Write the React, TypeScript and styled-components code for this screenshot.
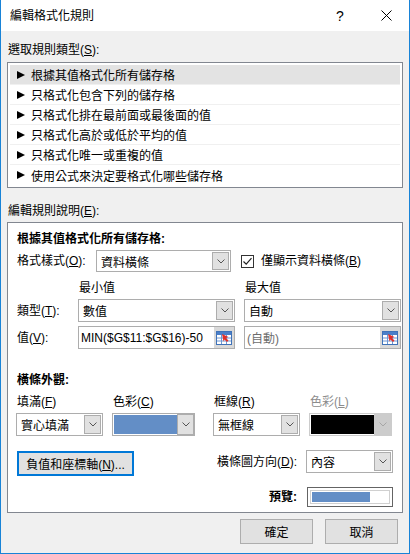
import styled, { createGlobalStyle } from 'styled-components';

const GlobalStyle = createGlobalStyle`
  html, body {
    margin: 0;
    padding: 0;
    background: #f0f0f0;
  }
  body {
    font-family: "Liberation Sans", "Noto Sans CJK TC", sans-serif;
    font-size: 12px;
    color: #000;
  }
`;

const Window = styled.div`
  width: 410px;
  height: 554px;
  box-sizing: border-box;
  border: 1px solid #1883d7;
  border-top: none;
  background: #f0f0f0;
  display: flex;
  flex-direction: column;
`;

const TitleBar = styled.div`
  height: 31px;
  flex-shrink: 0;
  background: #fff;
  display: flex;
  align-items: center;
  padding-left: 9px;
`;

const TitleText = styled.div`
  flex: 1;
  line-height: 16px;
`;

const CaptionButton = styled.div`
  width: 46px;
  height: 31px;
  display: flex;
  align-items: center;
  justify-content: center;
  font-size: 14px;
`;

const Body = styled.div`
  padding: 11px 6px 0;
  display: flex;
  flex-direction: column;
`;

const SectionLabel = styled.div<{ $gap?: number }>`
  line-height: 16px;
  padding-left: 1px;
  margin-top: ${(p) => p.$gap ?? 0}px;
`;

const RuleList = styled.div`
  margin-top: 4px;
  border: 1px solid #828790;
  background: #fff;
  padding: 2px;
`;

const RuleRow = styled.div<{ $selected?: boolean }>`
  height: 20px;
  box-sizing: border-box;
  display: flex;
  align-items: center;
  background: ${(p) => (p.$selected ? '#e3e3e3' : '#fff')};
  border-bottom: 1px solid #f0f0f0;
  &:last-child {
    border-bottom: none;
  }
`;

const Arrow = styled.span`
  width: 0;
  height: 0;
  margin: 0 6px 0 7px;
  border-left: 8px solid #000;
  border-top: 4px solid transparent;
  border-bottom: 4px solid transparent;
`;

const Panel = styled.div`
  margin-top: 3px;
  border: 1px solid #828790;
  background: #fff;
  padding: 8px 9px 5px;
  display: flex;
  flex-direction: column;
`;

const Heading = styled.div<{ $gap?: number }>`
  font-weight: bold;
  line-height: 16px;
  margin-top: ${(p) => p.$gap ?? 0}px;
`;

const FormatRow = styled.div`
  margin-top: 3px;
  height: 22px;
  display: flex;
  align-items: center;
`;

const FieldLabel = styled.div<{ $width: number }>`
  width: ${(p) => p.$width}px;
  flex-shrink: 0;
  line-height: 16px;
`;

const Combo = styled.div<{ $width?: number; $height?: number; $disabled?: boolean }>`
  width: ${(p) => (p.$width ? `${p.$width}px` : 'auto')};
  height: ${(p) => p.$height ?? 23}px;
  box-sizing: border-box;
  border: 1px solid ${(p) => (p.$disabled ? '#cccccc' : '#adadad')};
  background: #fff;
  display: flex;
  align-items: stretch;
`;

const ComboText = styled.div<{ $muted?: boolean; $pad?: number }>`
  flex: 1;
  min-width: 0;
  padding-left: ${(p) => p.$pad ?? 4}px;
  display: flex;
  align-items: center;
  white-space: nowrap;
  overflow: hidden;
  color: ${(p) => (p.$muted ? '#6d6d6d' : '#000')};
`;

const ComboButton = styled.div<{ $disabled?: boolean; $flush?: boolean }>`
  width: 17px;
  margin: ${(p) => (p.$flush ? '0' : '1px')};
  box-sizing: border-box;
  border: 1px solid ${(p) => (p.$disabled ? '#cccccc' : '#adadad')};
  background: ${(p) => (p.$disabled ? '#cccccc' : '#e1e1e1')};
  display: flex;
  align-items: center;
  justify-content: center;
`;

const Swatch = styled.div<{ $color: string }>`
  flex: 1;
  margin: 1px 0 1px 1px;
  background: ${(p) => p.$color};
`;

const RefButton = styled.div`
  width: 20px;
  background: #d9d9d9;
  display: flex;
  align-items: center;
  justify-content: center;
`;

const CheckBox = styled.div`
  width: 13px;
  height: 13px;
  box-sizing: border-box;
  border: 1px solid #333;
  background: #fff;
  margin-left: 10px;
  display: flex;
  align-items: center;
  justify-content: center;
`;

const CheckLabel = styled.div`
  margin-left: 7px;
  line-height: 16px;
`;

const ValueGrid = styled.div<{ $gap: number; $height: number }>`
  margin-top: ${(p) => p.$gap}px;
  height: ${(p) => p.$height}px;
  display: grid;
  grid-template-columns: 52px 157px 157px;
  column-gap: 9px;
  align-items: center;
`;

const ColumnLabel = styled.div<{ $muted?: boolean }>`
  padding-left: 1px;
  line-height: 16px;
  color: ${(p) => (p.$muted ? '#8c8c8c' : '#000')};
`;

const AppearanceGrid = styled.div<{ $gap: number }>`
  margin: ${(p) => p.$gap}px 0 0 -1px;
  display: grid;
  grid-template-columns: 96px 101px 96px 83px;
  align-items: center;
`;

const ActionRow = styled.div`
  margin-top: 14px;
  height: 26px;
  display: flex;
  justify-content: space-between;
  align-items: flex-start;
`;

const AxisButton = styled.button`
  margin-top: 1px;
  width: 117px;
  height: 25px;
  box-sizing: border-box;
  border: 2px solid #0078d7;
  background: #e1e1e1;
  font: inherit;
  color: #000;
  padding: 0;
`;

const RightGroup = styled.div`
  display: flex;
  align-items: center;
  height: 23px;
`;

const InlineLabel = styled.div<{ $bold?: boolean }>`
  margin-right: ${(p) => (p.$bold ? 10 : 9)}px;
  line-height: 16px;
  font-weight: ${(p) => (p.$bold ? 'bold' : 'normal')};
`;

const PreviewRow = styled.div`
  margin-top: 11px;
  display: flex;
  justify-content: flex-end;
  align-items: center;
`;

const PreviewBox = styled.div`
  width: 86px;
  height: 20px;
  box-sizing: border-box;
  border: 1px solid #646464;
  padding: 2px;
  background: #fff;
`;

const PreviewInner = styled.div`
  height: 100%;
  box-sizing: border-box;
  border: 1px solid #d0d0d0;
  padding: 1px;
`;

const PreviewBar = styled.div`
  width: 58px;
  height: 100%;
  background: #638ec6;
`;

const Footer = styled.div`
  margin-top: 6px;
  padding-right: 5px;
  display: flex;
  justify-content: flex-end;
  gap: 12px;
`;

const DialogButton = styled.button`
  width: 73px;
  height: 25px;
  box-sizing: border-box;
  border: 1px solid #adadad;
  background: #e1e1e1;
  font: inherit;
  color: #000;
  padding: 0;
`;

const Chevron = ({ color = '#555' }: { color?: string }) => (
  <svg width="8" height="5" viewBox="0 0 8 5">
    <polyline points="0.5,0.5 4,4 7.5,0.5" fill="none" stroke={color} strokeWidth="1" />
  </svg>
);

const RefIcon = () => (
  <svg width="16" height="14" viewBox="0 0 16 14">
    <rect x="0.5" y="0.5" width="15" height="13" fill="#fff" stroke="#3f72b8" />
    <rect x="1" y="1" width="14" height="3" fill="#4a7fc9" />
    <line x1="1" y1="7" x2="15" y2="7" stroke="#6d97d4" />
    <line x1="1" y1="10" x2="15" y2="10" stroke="#6d97d4" />
    <line x1="5.5" y1="4" x2="5.5" y2="13" stroke="#6d97d4" />
    <line x1="10.5" y1="4" x2="10.5" y2="13" stroke="#6d97d4" />
    <polygon points="6,3 12.5,6 10,7 12.5,9.5 11,11 8.5,8.5 7.5,10.5" fill="#e0302a" />
  </svg>
);

const rules = [
  '根據其值格式化所有儲存格',
  '只格式化包含下列的儲存格',
  '只格式化排在最前面或最後面的值',
  '只格式化高於或低於平均的值',
  '只格式化唯一或重複的值',
  '使用公式來決定要格式化哪些儲存格',
];

export default function App() {
  return (
    <>
      <GlobalStyle />
      <Window>
        <TitleBar>
          <TitleText>編輯格式化規則</TitleText>
          <CaptionButton>?</CaptionButton>
          <CaptionButton>
            <svg width="11" height="11" viewBox="0 0 11 11">
              <line x1="0.5" y1="0.5" x2="10.5" y2="10.5" stroke="#000" />
              <line x1="10.5" y1="0.5" x2="0.5" y2="10.5" stroke="#000" />
            </svg>
          </CaptionButton>
        </TitleBar>
        <Body>
          <SectionLabel>
            選取規則類型(<u>S</u>):
          </SectionLabel>
          <RuleList>
            {rules.map((r, i) => (
              <RuleRow key={r} $selected={i === 0}>
                <Arrow />
                {r}
              </RuleRow>
            ))}
          </RuleList>

          <SectionLabel $gap={15}>
            編輯規則說明(<u>E</u>):
          </SectionLabel>
          <Panel>
            <Heading>根據其值格式化所有儲存格:</Heading>
            <FormatRow>
              <FieldLabel $width={79}>
                格式樣式(<u>O</u>):
              </FieldLabel>
              <Combo $width={135} $height={22}>
                <ComboText>資料橫條</ComboText>
                <ComboButton>
                  <Chevron />
                </ComboButton>
              </Combo>
              <CheckBox>
                <svg width="11" height="11" viewBox="0 0 11 11">
                  <polyline points="1.5,5.5 4.2,8.2 9.5,2.2" fill="none" stroke="#222" strokeWidth="1.2" />
                </svg>
              </CheckBox>
              <CheckLabel>
                僅顯示資料橫條(<u>B</u>)
              </CheckLabel>
            </FormatRow>

            <ValueGrid $gap={8} $height={16}>
              <span />
              <ColumnLabel>最小值</ColumnLabel>
              <ColumnLabel>最大值</ColumnLabel>
            </ValueGrid>
            <ValueGrid $gap={3} $height={23}>
              <FieldLabel $width={52}>
                類型(<u>T</u>):
              </FieldLabel>
              <Combo>
                <ComboText>數值</ComboText>
                <ComboButton>
                  <Chevron />
                </ComboButton>
              </Combo>
              <Combo>
                <ComboText>自動</ComboText>
                <ComboButton>
                  <Chevron />
                </ComboButton>
              </Combo>
            </ValueGrid>
            <ValueGrid $gap={4} $height={23}>
              <FieldLabel $width={52}>
                值(<u>V</u>):
              </FieldLabel>
              <Combo>
                <ComboText $pad={2}>MIN($G$11:$G$16)-50</ComboText>
                <RefButton>
                  <RefIcon />
                </RefButton>
              </Combo>
              <Combo>
                <ComboText $pad={2} $muted>
                  (自動)
                </ComboText>
                <RefButton>
                  <RefIcon />
                </RefButton>
              </Combo>
            </ValueGrid>

            <Heading $gap={23}>橫條外觀:</Heading>
            <AppearanceGrid $gap={6}>
              <ColumnLabel>
                填滿(<u>F</u>)
              </ColumnLabel>
              <ColumnLabel>
                色彩(<u>C</u>)
              </ColumnLabel>
              <ColumnLabel>
                框線(<u>R</u>)
              </ColumnLabel>
              <ColumnLabel $muted>
                色彩(<u>L</u>)
              </ColumnLabel>
            </AppearanceGrid>
            <AppearanceGrid $gap={3}>
              <Combo $width={87}>
                <ComboText>實心填滿</ComboText>
                <ComboButton>
                  <Chevron />
                </ComboButton>
              </Combo>
              <Combo $width={83}>
                <Swatch $color="#638ec6" />
                <ComboButton $flush>
                  <Chevron />
                </ComboButton>
              </Combo>
              <Combo $width={87}>
                <ComboText>無框線</ComboText>
                <ComboButton>
                  <Chevron />
                </ComboButton>
              </Combo>
              <Combo $width={83} $disabled>
                <Swatch $color="#000" />
                <ComboButton $flush $disabled>
                  <Chevron color="#a6a6a6" />
                </ComboButton>
              </Combo>
            </AppearanceGrid>

            <ActionRow>
              <AxisButton>
                負值和座標軸(<u>N</u>)...
              </AxisButton>
              <RightGroup>
                <InlineLabel>
                  橫條圖方向(<u>D</u>):
                </InlineLabel>
                <Combo $width={87}>
                  <ComboText>內容</ComboText>
                  <ComboButton>
                    <Chevron />
                  </ComboButton>
                </Combo>
              </RightGroup>
            </ActionRow>

            <PreviewRow>
              <InlineLabel $bold>預覽:</InlineLabel>
              <PreviewBox>
                <PreviewInner>
                  <PreviewBar />
                </PreviewInner>
              </PreviewBox>
            </PreviewRow>
          </Panel>

          <Footer>
            <DialogButton>確定</DialogButton>
            <DialogButton>取消</DialogButton>
          </Footer>
        </Body>
      </Window>
    </>
  );
}
